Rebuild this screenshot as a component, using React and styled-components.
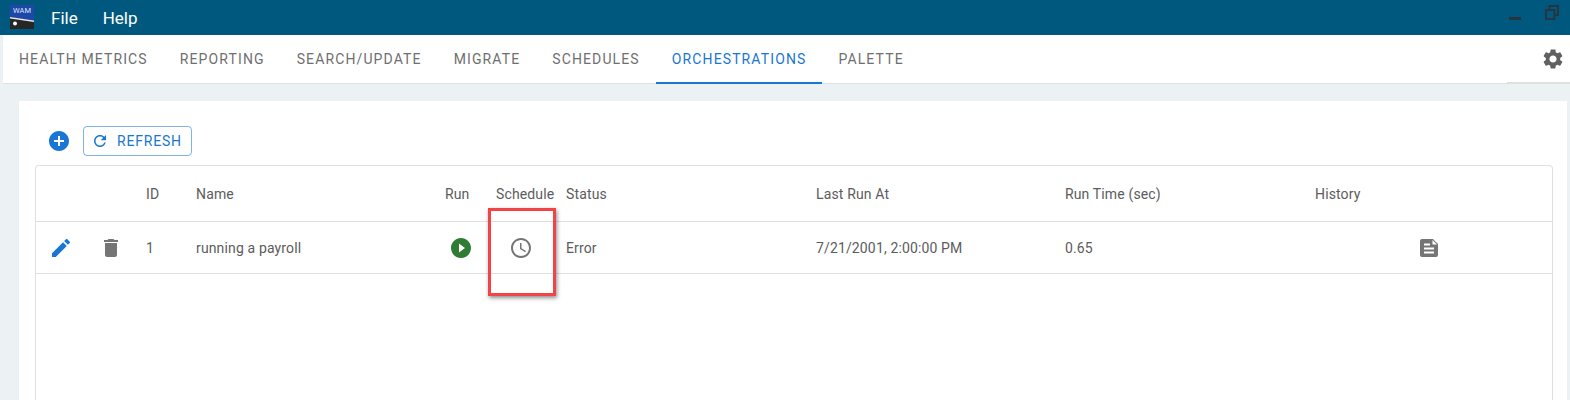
import React from 'react';
import styled, { createGlobalStyle } from 'styled-components';

const GlobalStyle = createGlobalStyle`
  html, body { margin: 0; padding: 0; height: 400px; overflow: hidden; background: #ecf2f4; }
  body { font-family: Roboto, "Liberation Sans", sans-serif; }
`;

const Page = styled.div`
  width: 1570px;
  height: 400px;
  position: relative;
  overflow: hidden;
  display: flex;
  flex-direction: column;
`;

const TitleBar = styled.div`
  height: 35px;
  flex: none;
  background: #00587f;
  display: flex;
  align-items: center;
  padding-left: 10px;
`;

const Logo = styled.svg`
  width: 24px;
  height: 24px;
  margin-right: 17px;
  margin-top: -2px;
`;

const MenuItem = styled.span`
  color: #fff;
  font-size: 17px;
  margin-right: 25px;
`;

const WindowButtons = styled.div`
  margin-left: auto;
  display: flex;
  align-items: flex-end;
  gap: 24px;
  padding: 0 11px 11px 0;
`;

const TabBar = styled.div`
  height: 49px;
  flex: none;
  box-sizing: border-box;
  margin-left: 3px;
  background: #fff;
  border-bottom: 1px solid #dfe2e3;
  display: flex;
  align-items: stretch;
`;

const Tab = styled.div`
  padding: 0 16px;
  display: flex;
  align-items: center;
  font-size: 14px;
  letter-spacing: 1.12px;
  color: ${props => (props.$active ? '#1976d2' : '#6f6f6f')};
  border-bottom: 2px solid ${props => (props.$active ? '#1976d2' : 'transparent')};
  margin-bottom: -1px;
  box-sizing: border-box;
`;

const SettingsButton = styled.div`
  margin-left: auto;
  width: 63px;
  box-sizing: border-box;
  margin-bottom: -1px;
  border-bottom: 2px solid #e0e0e0;
  padding: 0 5px 0 0;
  display: flex;
  align-items: center;
  justify-content: flex-end;
`;

const Content = styled.div`
  flex: 1;
  padding: 17px 3px 0 19px;
  min-height: 0;
`;

const Panel = styled.div`
  background: #fff;
  height: 100%;
  box-sizing: border-box;
  padding: 25px 14px 0 16px;
`;

const Toolbar = styled.div`
  height: 30px;
  display: flex;
  align-items: center;
  padding-left: 12px;
  margin-bottom: 9px;
`;

const AddIcon = styled.svg`
  width: 24px;
  height: 24px;
  fill: #1976d2;
  margin-right: 12px;
`;

const RefreshButton = styled.div`
  height: 30px;
  box-sizing: border-box;
  width: 109px;
  border: 1px solid rgba(25, 118, 210, 0.55);
  border-radius: 4px;
  display: flex;
  align-items: center;
  padding: 0 0 1px 7px;
  gap: 8px;
  color: #1976d2;
  font-size: 14px;
  letter-spacing: 0.8px;
`;

const Table = styled.div`
  border: 1px solid #e0e0e0;
  border-bottom: none;
  border-radius: 4px 4px 0 0;
  height: 260px;
  box-sizing: border-box;
`;

const Row = styled.div`
  display: grid;
  grid-template-columns: 63px 47px 50px 249px 51px 70px 250px 249px 250px 1fr;
  height: ${props => props.$height}px;
  box-sizing: border-box;
  border-bottom: 1px solid #e0e0e0;
  align-items: center;
`;

const Cell = styled.div`
  font-size: 14px;
  letter-spacing: 0.14px;
  color: #5c5c5c;
  padding-left: ${props => props.$indent || 0}px;
  white-space: nowrap;
  display: flex;
  align-items: center;
`;

const Icon = styled.svg`
  width: ${props => props.$size || 24}px;
  height: ${props => props.$size || 24}px;
  fill: ${props => props.$color || '#757575'};
  display: block;
`;

// red annotation drawn over the screenshot
const Highlight = styled.div`
  position: absolute;
  left: 488px;
  top: 208px;
  width: 68px;
  height: 88px;
  box-sizing: border-box;
  border: 3px solid #f44347;
  box-shadow: 1px 2px 4px rgba(0, 0, 0, 0.45);
`;

const App = () => {
  return (
    <Page>
      <GlobalStyle />
      <TitleBar>
        <Logo viewBox="0 0 24 24">
          <rect width="24" height="24" fill="#262626" />
          <path d="M0 0h24v15.500L0 12z" fill="#1d47a8" />
          <path d="M0 12l24 3.500v1.500L0 13.500z" fill="#e4e8f0" />
          <circle cx="5" cy="18.500" r="2" fill="#fff" />
          <text x="3" y="8" fontSize="7.500" fill="#dfe6f7" fontFamily="Roboto, sans-serif">WAM</text>
        </Logo>
        <MenuItem>File</MenuItem>
        <MenuItem>Help</MenuItem>
        <WindowButtons>
          <svg width="12" height="3" viewBox="0 0 12 3"><rect width="12" height="3" fill="#263640" /></svg>
          <svg width="14" height="15" viewBox="0 0 14 15" fill="none" stroke="#263640" strokeWidth="2">
            <rect x="1" y="5" width="8.500" height="9" />
            <path d="M4.500 4V1H13v9h-3" />
          </svg>
        </WindowButtons>
      </TitleBar>

      <TabBar>
        <Tab>HEALTH METRICS</Tab>
        <Tab>REPORTING</Tab>
        <Tab>SEARCH/UPDATE</Tab>
        <Tab>MIGRATE</Tab>
        <Tab>SCHEDULES</Tab>
        <Tab $active>ORCHESTRATIONS</Tab>
        <Tab>PALETTE</Tab>
        <SettingsButton>
          <Icon $size={24} $color="#616161" viewBox="0 0 24 24">
            <path d="M19.140 12.940c.04-.3.060-.610.060-.940 0-.320-.020-.640-.070-.940l2.030-1.580c.180-.140.230-.410.120-.610l-1.920-3.320c-.120-.220-.370-.290-.590-.220l-2.390.960c-.500-.380-1.030-.700-1.620-.940l-.360-2.540c-.040-.240-.240-.410-.480-.410h-3.840c-.240 0-.430.170-.470.410l-.360 2.540c-.590.240-1.130.570-1.620.940l-2.390-.960c-.220-.080-.470 0-.590.220L2.740 8.870c-.120.210-.080.470.120.610l2.030 1.580c-.050.300-.090.630-.090.940s.020.640.070.940l-2.030 1.580c-.180.140-.230.410-.120.610l1.920 3.320c.120.220.370.290.590.220l2.390-.960c.500.380 1.030.700 1.620.940l.360 2.540c.050.240.240.410.480.410h3.840c.240 0 .440-.170.470-.410l.360-2.540c.590-.240 1.130-.560 1.620-.940l2.390.960c.220.080.470 0 .590-.220l1.920-3.320c.120-.220.070-.470-.120-.610l-2.010-1.580zM12 15.600c-1.980 0-3.600-1.620-3.600-3.600s1.620-3.600 3.600-3.600 3.600 1.620 3.600 3.600-1.620 3.600-3.600 3.600z" />
          </Icon>
        </SettingsButton>
      </TabBar>

      <Content>
        <Panel>
          <Toolbar>
            <AddIcon viewBox="0 0 24 24">
              <path d="M12 2C6.480 2 2 6.480 2 12s4.480 10 10 10 10-4.480 10-10S17.520 2 12 2zm5 11h-4v4h-2v-4H7v-2h4V7h2v4h4v2z" />
            </AddIcon>
            <RefreshButton>
              <Icon $size={18} $color="#1976d2" viewBox="0 0 24 24">
                <path d="M17.650 6.350C16.200 4.900 14.210 4 12 4c-4.420 0-7.990 3.580-7.990 8s3.570 8 7.990 8c3.730 0 6.840-2.550 7.730-6h-2.080c-.820 2.330-3.040 4-5.650 4-3.310 0-6-2.690-6-6s2.690-6 6-6c1.660 0 3.140.690 4.220 1.780L13 11h7V4l-2.350 2.350z" />
              </Icon>
              REFRESH
            </RefreshButton>
          </Toolbar>

          <Table>
            <Row $height={56}>
              <Cell />
              <Cell />
              <Cell>ID</Cell>
              <Cell>Name</Cell>
              <Cell>Run</Cell>
              <Cell>Schedule</Cell>
              <Cell>Status</Cell>
              <Cell>Last Run At</Cell>
              <Cell>Run Time (sec)</Cell>
              <Cell>History</Cell>
            </Row>
            <Row $height={52}>
              <Cell $indent={13}>
                <Icon $color="#1976d2" viewBox="0 0 24 24">
                  <path d="M3 17.250V21h3.750L17.810 9.940l-3.750-3.750L3 17.250zM20.710 7.040c.390-.390.390-1.020 0-1.410l-2.340-2.340c-.390-.390-1.020-.390-1.410 0l-1.830 1.830 3.750 3.750 1.830-1.830z" />
                </Icon>
              </Cell>
              <Cell>
                <Icon viewBox="0 0 24 24">
                  <path d="M6 19c0 1.100.900 2 2 2h8c1.100 0 2-.900 2-2V7H6v12zM19 4h-3.500l-1-1h-5l-1 1H5v2h14V4z" />
                </Icon>
              </Cell>
              <Cell>1</Cell>
              <Cell>running a payroll</Cell>
              <Cell $indent={4}>
                <Icon $color="#2e7d32" viewBox="0 0 24 24">
                  <path d="M12 2C6.480 2 2 6.480 2 12s4.480 10 10 10 10-4.480 10-10S17.520 2 12 2zm-2 14.500v-9l6 4.500-6 4.500z" />
                </Icon>
              </Cell>
              <Cell $indent={13}>
                <Icon viewBox="0 0 24 24">
                  <path d="M11.990 2C6.470 2 2 6.480 2 12s4.470 10 9.990 10C17.520 22 22 17.520 22 12S17.520 2 11.990 2zM12 20c-4.420 0-8-3.580-8-8s3.580-8 8-8 8 3.580 8 8-3.580 8-8 8zm.500-13H11v6l5.250 3.150.750-1.230-4.500-2.670V7z" />
                </Icon>
              </Cell>
              <Cell>Error</Cell>
              <Cell>7/21/2001, 2:00:00 PM</Cell>
              <Cell>0.65</Cell>
              <Cell $indent={102}>
                <Icon viewBox="0 0 24 24">
                  <path fillRule="evenodd" d="M5 3h11l5 5v11a2 2 0 0 1-2 2H5a2 2 0 0 1-2-2V5a2 2 0 0 1 2-2zm2 4.500V9.500h6V7.500H7zm0 4v2h10v-2H7zm0 4v2h10v-2H7zM15.500 4v4.500H20L15.500 4z" />
                </Icon>
              </Cell>
            </Row>
          </Table>
        </Panel>
      </Content>
      <Highlight />
    </Page>
  );
};

export default App;
